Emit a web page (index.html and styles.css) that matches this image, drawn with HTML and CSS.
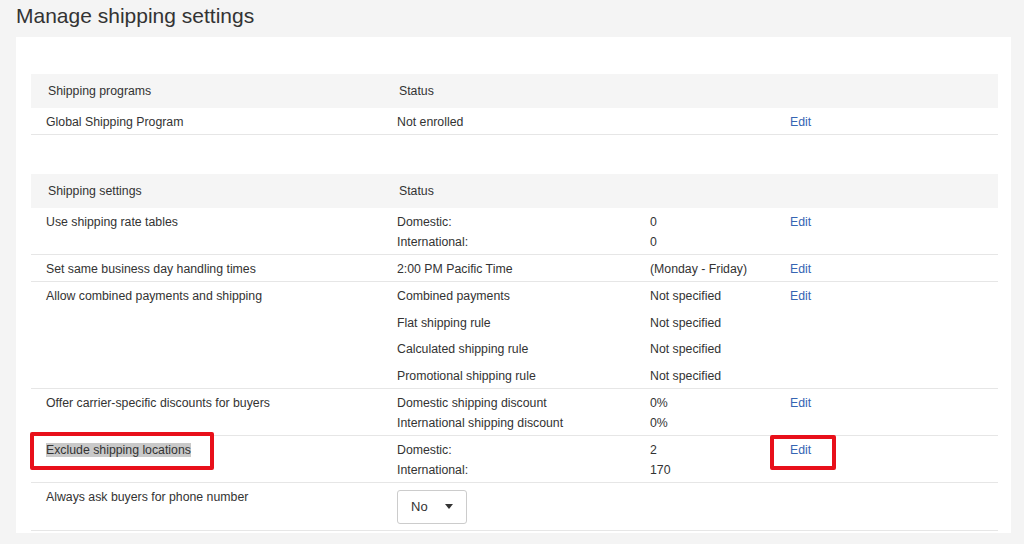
FILE: index.html
```html
<!DOCTYPE html>
<html lang="en">
<head>
	<meta charset="UTF-8">
	<meta name="viewport" content="width=device-width, initial-scale=1.0">
	<title>Manage shipping settings</title>
	<link rel="stylesheet" href="styles.css">
</head>
<body>
	<h1 class="title">Manage shipping settings</h1>

	<div class="card">
		<table class="table">
			<colgroup>
				<col class="c1"><col class="c2"><col class="c3"><col>
			</colgroup>
			<tr>
				<th>Shipping programs</th>
				<th>Status</th>
				<th></th>
				<th></th>
			</tr>
			<tr>
				<td>Global Shipping Program</td>
				<td>Not enrolled</td>
				<td></td>
				<td><a class="edit" href="#">Edit</a></td>
			</tr>
		</table>

		<table class="table second">
			<colgroup>
				<col class="c1"><col class="c2"><col class="c3"><col>
			</colgroup>
			<tr>
				<th>Shipping settings</th>
				<th>Status</th>
				<th></th>
				<th></th>
			</tr>
			<tr>
				<td>Use shipping rate tables</td>
				<td><div>Domestic:</div><div>International:</div></td>
				<td><div>0</div><div>0</div></td>
				<td><a class="edit" href="#">Edit</a></td>
			</tr>
			<tr>
				<td>Set same business day handling times</td>
				<td>2:00 PM Pacific Time</td>
				<td>(Monday - Friday)</td>
				<td><a class="edit" href="#">Edit</a></td>
			</tr>
			<tr class="spaced">
				<td>Allow combined payments and shipping</td>
				<td>
					<div class="line">Combined payments</div>
					<div class="line">Flat shipping rule</div>
					<div class="line">Calculated shipping rule</div>
					<div class="line">Promotional shipping rule</div>
				</td>
				<td>
					<div class="line">Not specified</div>
					<div class="line">Not specified</div>
					<div class="line">Not specified</div>
					<div class="line">Not specified</div>
				</td>
				<td><a class="edit" href="#">Edit</a></td>
			</tr>
			<tr>
				<td>Offer carrier-specific discounts for buyers</td>
				<td><div>Domestic shipping discount</div><div>International shipping discount</div></td>
				<td><div>0%</div><div>0%</div></td>
				<td><a class="edit" href="#">Edit</a></td>
			</tr>
			<tr>
				<td class="marked">
					<span class="selected">Exclude shipping locations</span>
					<span class="callout label-box"></span>
				</td>
				<td><div>Domestic:</div><div>International:</div></td>
				<td><div>2</div><div>170</div></td>
				<td class="marked">
					<a class="edit" href="#">Edit</a>
					<span class="callout edit-box"></span>
				</td>
			</tr>
			<tr>
				<td>Always ask buyers for phone number</td>
				<td class="select-cell">
					<div class="select">
						<span>No</span>
						<span class="caret"></span>
					</div>
				</td>
				<td></td>
				<td></td>
			</tr>
		</table>
	</div>
</body>
</html>
```

FILE: styles.css
```css
:root {
	--text: #333;
	--line: #e6e6e6;
	--bg: #f4f4f4;
}

* { box-sizing: border-box; padding: 0; margin: 0; }

body {
	background: var(--bg);
	color: var(--text);
	font-family: "Liberation Sans", Arial, sans-serif;
	font-size: 12.3px;
}

.title {
	font-size: 21px;
	font-weight: normal;
	line-height: 24px;
	margin: 4px 0 9px 16px;
}

.card {
	background: #fff;
	margin: 0 13px 0 16px;
	padding: 37px 13px 2px 15px;
}

.table {
	width: 100%;
	border-collapse: collapse;
	table-layout: fixed;
}
.table.second { margin-top: 39px; }

.c1 { width: 351px; }
.c2 { width: 253px; }
.c3 { width: 140px; }

.table th {
	background: #f5f5f5;
	font-weight: normal;
	text-align: left;
	line-height: 20px;
	padding: 7px 15px 7px 17px;
}

.table td {
	vertical-align: top;
	line-height: 20px;
	padding: 4px 15px 2px;
	border-bottom: 1px solid var(--line);
}

.spaced .line + .line { margin-top: 6.5px; }

.edit {
	color: #3665b3;
	text-decoration: none;
}

.marked { position: relative; }

.selected { background: #c9c9c9; }

.callout {
	position: absolute;
	border: 4px solid #e8101a;
	border-radius: 2px;
}
.label-box { left: -1px; top: -4px; width: 184px; height: 38px; }
.edit-box { left: -5px; top: -1px; width: 66px; height: 35px; }

.table td.select-cell { padding-top: 7px; padding-bottom: 6px; }

.select {
	display: flex;
	align-items: center;
	justify-content: space-between;
	width: 70px;
	height: 34px;
	padding: 0 13px 0 13px;
	border: 1px solid #ccc;
	border-radius: 3px;
	font-size: 13px;
}

.caret {
	width: 0;
	height: 0;
	border-left: 4px solid transparent;
	border-right: 4px solid transparent;
	border-top: 5px solid #333;
}
```
